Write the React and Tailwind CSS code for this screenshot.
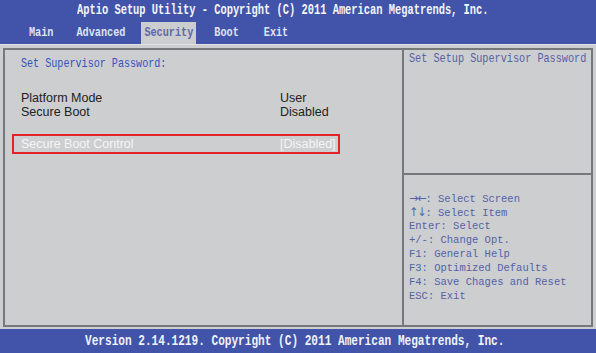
const tabs = [
  { name: "Main", ml: "ml-[26px]" },
  { name: "Advanced", ml: "ml-[17px]" },
  { name: "Security", ml: "ml-[13px]", active: true },
  { name: "Boot", ml: "ml-[15px]" },
  { name: "Exit", ml: "ml-[19px]" },
];

const helpKeys = [
  { arrows: "→←", text: ": Select Screen" },
  { arrows: "↑↓", text: ": Select Item" },
  { text: "Enter: Select" },
  { text: "+/-: Change Opt." },
  { text: "F1: General Help" },
  { text: "F3: Optimized Defaults" },
  { text: "F4: Save Chages and Reset" },
  { text: "ESC: Exit" },
];

function Row({ label, value }) {
  return (
    <div className="flex h-[14px] items-center leading-[14px] text-[#222] font-['Liberation_Sans',Arial,sans-serif] text-[12.5px]">
      <span className="w-[259px]">{label}</span>
      <span>{value}</span>
    </div>
  );
}

export default function App() {
  return (
    <div className="w-[596px] h-[353px] flex flex-col bg-[#cdced0] overflow-hidden">
      {/* title + tabs */}
      <div className="h-[44px] bg-[#4254a9] flex flex-col font-['Liberation_Mono',monospace] font-bold">
        <div className="h-[22px] flex items-center pl-[77px] text-[10.4px] text-[#f4f5fa] whitespace-pre">
          <span className="inline-block scale-y-[1.38]">
            Aptio Setup Utility - Copyright (C) 2011 American Megatrends, Inc.
          </span>
        </div>
        <div className="h-[22px] flex text-[10.2px]">
          {tabs.map((t) => (
            <div
              key={t.name}
              className={
                t.ml +
                " px-[3px] flex items-center " +
                (t.active ? "bg-[#cbcdcf] text-[#5d6aa6]" : "text-[#dfe3f2]")
              }
            >
              <span className="inline-block scale-y-[1.34]">{t.name}</span>
            </div>
          ))}
        </div>
      </div>

      {/* main panel */}
      <div className="flex-1 pt-[3px] pb-[2px] px-[3px] border-t border-[#e2e3e6]">
        <div className="h-full flex border-2 border-[#77787b]">
          <div className="w-[397px] pt-[8px]">
            <div className="pl-[16px] h-[14px] flex items-center font-['Liberation_Mono',monospace] text-[10.1px] text-[#3552c2] whitespace-pre">
              <span className="inline-block scale-y-[1.2]">Set Supervisor Password:</span>
            </div>
            <div className="pl-[16px] mt-[19px]">
              <Row label="Platform Mode" value="User" />
              <Row label="Secure Boot" value="Disabled" />
            </div>
            <div className="ml-[7px] mt-[15px] w-[328px] h-[20px] border-2 border-[#e0242a] pl-[7px] flex items-center text-[#f5f5f5] font-['Liberation_Sans',Arial,sans-serif] text-[12.5px]">
              <span className="w-[259px]">Secure Boot Control</span>
              <span>[Disabled]</span>
            </div>
          </div>

          <div className="flex-1 flex flex-col border-l-2 border-[#77787b] font-['Liberation_Mono',monospace] text-[#5462a6]">
            <div className="h-[123px] pt-[3px] pl-[5px]">
              <div className="h-[14px] flex items-center text-[10.2px] whitespace-pre">
                <span className="inline-block scale-y-[1.17]">Set Setup Supervisor Password</span>
              </div>
            </div>
            <div className="flex-1 border-t-2 border-[#77787b] pt-[17px] pl-[5px] text-[10.5px]">
              {helpKeys.map((k) => (
                <div key={k.text} className="h-[14px] flex items-center whitespace-pre">
                  <span className="inline-block scale-y-[1.1]">
                    {k.arrows && (
                      <span className="font-['DejaVu_Sans',sans-serif] text-[11px] tracking-[-1px]">{k.arrows}</span>
                    )}
                    {k.text}
                  </span>
                </div>
              ))}
            </div>
          </div>
        </div>
      </div>

      {/* footer */}
      <div className="h-[24px] bg-[#4254a9] flex items-center pl-[85px] font-['Liberation_Mono',monospace] font-bold text-[11.1px] text-[#f0f2f8] whitespace-pre">
        <span className="inline-block scale-y-[1.3]">
          Version 2.14.1219. Copyright (C) 2011 American Megatrends, Inc.
        </span>
      </div>
    </div>
  );
}
